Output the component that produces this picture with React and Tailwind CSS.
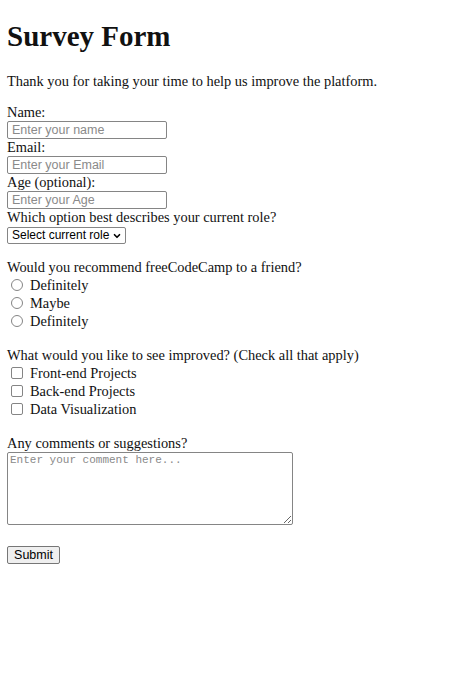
import { ChevronDown } from 'lucide-react';

const serif = { fontFamily: '"Liberation Serif", "Times New Roman", serif' };

const TextField = ({ label, placeholder, type = 'text' }) => (
  <>
    <label className="block h-[17px] leading-[17px]">{label}</label>
    <input
      type={type}
      placeholder={placeholder}
      className="block h-[18px] w-[160px] rounded-[2px] border border-[#858585] bg-white px-[4px] font-['Liberation_Sans',Arial,sans-serif] text-[12.5px] text-black outline-none placeholder:text-[#8a8a8a]"
    />
  </>
);

const Choice = ({ kind, name, label }) => (
  <label className="flex h-[18px] items-center">
    <input
      type={kind}
      name={name}
      className={`ml-[4px] mr-[7px] h-[12px] w-[12px] appearance-none border border-[#858585] bg-white ${
        kind === 'radio' ? 'rounded-full' : 'rounded-[2px]'
      }`}
    />
    <span className="leading-[17px]">{label}</span>
  </label>
);

export default function App() {
  return (
    <div className="min-h-[680px] bg-white px-[7px] text-[14.4px] text-[#111]" style={serif}>
      <h1 className="pt-[20px] text-[29px] font-bold leading-[32px]">Survey Form</h1>
      <p className="mt-[21px] h-[17px] leading-[17px]">
        Thank you for taking your time to help us improve the platform.
      </p>

      <form className="mt-[14px]" onSubmit={(e) => e.preventDefault()}>
        <TextField label="Name:" placeholder="Enter your name" />
        <TextField label="Email:" placeholder="Enter your Email" type="email" />
        <TextField label="Age (optional):" placeholder="Enter your Age" type="number" />

        <label className="block h-[17px] leading-[17px]">Which option best describes your current role?</label>
        <div className="relative mt-[1px] w-[119px]">
          <select className="block h-[17px] w-full appearance-none rounded-[2px] border border-[#858585] bg-white pl-[4px] pr-[14px] font-['Liberation_Sans',Arial,sans-serif] text-[12px] leading-[15px] text-black outline-none">
            <option>Select current role</option>
            <option>Student</option>
            <option>Full Time Job</option>
            <option>Prefer not to say</option>
          </select>
          <ChevronDown
            size={10}
            strokeWidth={4}
            className="pointer-events-none absolute right-[4px] top-[4px] text-black"
          />
        </div>

        <p className="mt-[15px] h-[17px] leading-[17px]">Would you recommend freeCodeCamp to a friend?</p>
        <Choice kind="radio" name="recommend" label="Definitely" />
        <Choice kind="radio" name="recommend" label="Maybe" />
        <Choice kind="radio" name="recommend" label="Definitely" />

        <p className="mt-[17px] h-[17px] leading-[17px]">
          What would you like to see improved? (Check all that apply)
        </p>
        <Choice kind="checkbox" name="improve" label="Front-end Projects" />
        <Choice kind="checkbox" name="improve" label="Back-end Projects" />
        <Choice kind="checkbox" name="improve" label="Data Visualization" />

        <label className="mt-[17px] block h-[17px] leading-[17px]">Any comments or suggestions?</label>
        <textarea
          placeholder="Enter your comment here..."
          className="block h-[73px] w-[286px] rounded-[2px] border border-[#858585] bg-white px-[2px] py-[1px] font-['Liberation_Mono','Courier_New',monospace] text-[11px] leading-[13px] text-black outline-none placeholder:text-[#8a8a8a]"
        />

        <button
          type="submit"
          className="mt-[21px] block h-[18px] w-[53px] rounded-[2px] border border-[#767676] bg-[#efefef] font-['Liberation_Sans',Arial,sans-serif] text-[12.5px] leading-[16px] text-black"
        >
          Submit
        </button>
      </form>
    </div>
  );
}
